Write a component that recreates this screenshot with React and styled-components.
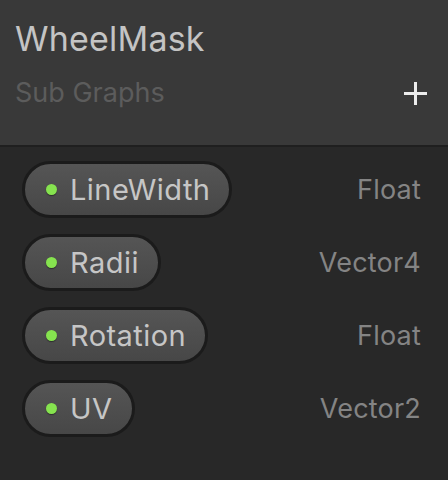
import React from "react";
import styled, { createGlobalStyle } from "styled-components";

const GlobalStyle = createGlobalStyle`
  html, body {
    margin: 0;
    padding: 0;
    background: #282828;
  }
  * {
    box-sizing: border-box;
  }
`;

const properties = [
  { name: "LineWidth", type: "Float" },
  { name: "Radii", type: "Vector4" },
  { name: "Rotation", type: "Float" },
  { name: "UV", type: "Vector2" },
];

const App = () => {
  return (
    <>
      <GlobalStyle />
      <Blackboard>
        <Header>
          <Title>WheelMask</Title>
          <SubRow>
            <SubTitle>Sub Graphs</SubTitle>
            <AddButton aria-label="Add property">
              <svg width="23" height="23" viewBox="0 0 23 23">
                <rect x="10" y="0" width="3" height="23" fill="#ececec" />
                <rect x="0" y="10" width="23" height="3" fill="#ececec" />
              </svg>
            </AddButton>
          </SubRow>
        </Header>
        <PropertyList>
          {properties.map((prop) => (
            <PropertyRow key={prop.name}>
              <Pill>
                <Dot />
                <PillLabel>{prop.name}</PillLabel>
              </Pill>
              <TypeLabel>{prop.type}</TypeLabel>
            </PropertyRow>
          ))}
        </PropertyList>
      </Blackboard>
    </>
  );
};

export default App;

const Blackboard = styled.div`
  width: 448px;
  height: 480px;
  display: flex;
  flex-direction: column;
  background: #282828;
  font-family: "Inter", "Noto Sans", sans-serif;
`;

const Header = styled.div`
  height: 147px;
  padding: 17px 21px 0 15px;
  background: #393939;
  border-bottom: 2px solid #1f1f1f;
  display: flex;
  flex-direction: column;
`;

const Title = styled.div`
  font-size: 34px;
  line-height: 44px;
  letter-spacing: 0.2px;
  color: #c4c4c4;
`;

const SubRow = styled.div`
  display: flex;
  align-items: center;
  justify-content: space-between;
  margin-top: 14px;
`;

const SubTitle = styled.div`
  font-size: 27px;
  line-height: 36px;
  color: #5c5c5c;
`;

const AddButton = styled.button`
  border: none;
  background: none;
  padding: 0;
  display: flex;
  cursor: pointer;
`;

const PropertyList = styled.div`
  display: flex;
  flex-direction: column;
  gap: 16px;
  padding: 14px 27px 0 22px;
`;

const PropertyRow = styled.div`
  display: flex;
  align-items: center;
  justify-content: space-between;
`;

const Pill = styled.div`
  height: 57px;
  display: flex;
  align-items: center;
  gap: 13px;
  padding: 0 19px 0 21px;
  border: 3px solid #1b1b1b;
  border-radius: 29px;
  background: linear-gradient(#555555, #474747);
`;

const Dot = styled.span`
  width: 11px;
  height: 11px;
  border-radius: 50%;
  background: #86e34f;
  box-shadow: 0 1px 1px rgba(0, 0, 0, 0.4);
`;

const PillLabel = styled.span`
  font-size: 29px;
  line-height: 36px;
  letter-spacing: 0.45px;
  color: #c6c6c6;
`;

const TypeLabel = styled.span`
  font-size: 27px;
  line-height: 36px;
  letter-spacing: 0.2px;
  color: #848484;
`;
